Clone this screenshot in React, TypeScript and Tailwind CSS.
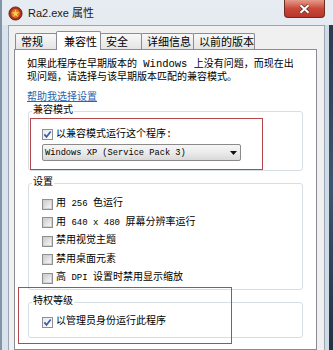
import React from "react";

// fonts: mono latin like SimSun's, CJK from Noto
const mono = "font-['Liberation_Mono','Noto_Sans_CJK_SC',monospace]";

function Box({ checked = false }: { checked?: boolean }) {
  return (
    <span className="relative flex h-[11px] w-[11px] shrink-0 items-center justify-center border border-[#8f8f8f] bg-[#f4f4f4]">
      {checked ? (
        <span className="h-[9px] w-[9px] bg-gradient-to-br from-[#e4e9f1] to-[#ffffff]" />
      ) : (
        <span className="h-[9px] w-[9px] border border-[#d2d2d2] bg-gradient-to-br from-[#cdcdcd] to-[#f7f7f7]" />
      )}
      {checked && (
        <svg className="absolute left-0 top-0" width="9" height="9" viewBox="0 0 9 9">
          <path d="M1.4 4.4 L3.5 6.9 L7.7 1.5" fill="none" stroke="#3b5c9e" strokeWidth="1.7" />
        </svg>
      )}
    </span>
  );
}

function Row({ checked, children }: { checked?: boolean; children: React.ReactNode }) {
  return (
    <div className="flex h-[18.5px] items-center gap-[3px]">
      <Box checked={checked} />
      <span className="leading-[12px]">{children}</span>
    </div>
  );
}

function Group({
  label,
  className = "",
  children,
}: {
  label: string;
  className?: string;
  children: React.ReactNode;
}) {
  return (
    <div className={"relative ml-[1px] w-[275px] rounded-[3px] border border-[#d5dfe5] " + className}>
      <span className="absolute left-[3px] top-[-7px] bg-white px-[1px] leading-[12px]">{label}</span>
      {children}
    </div>
  );
}

const L = ({ children }: { children: React.ReactNode }) => (
  <span className="text-[9px]">{children}</span>
);

const tabs = [
  { name: "常规", w: "w-[42px]" },
  { name: "兼容性", w: "w-[45px]", active: true },
  { name: "安全", w: "w-[42px]" },
  { name: "详细信息", w: "w-[53px]" },
  { name: "以前的版本", w: "w-[62px]" },
];

export default function App() {
  return (
    <div className="flex h-[350px] w-[333px] flex-col overflow-hidden border-l-2 border-[#8394a6] bg-gradient-to-b from-[#e6ecf2] to-[#d6e0ea] text-black">
      {/* title bar */}
      <div className="flex h-[25px] shrink-0 items-start">
        <svg className="ml-[6px] mt-[6px]" width="15" height="15" viewBox="0 0 15 15">
          <circle cx="7.5" cy="7.5" r="6.6" fill="#a9321c" stroke="#5a1a0e" strokeWidth="0.8" />
          <circle cx="7.5" cy="7.5" r="4.4" fill="#e0702a" />
          <path d="M7.5 3.4 L8.5 6.3 L11.4 6.3 L9 8.1 L9.9 11 L7.5 9.2 L5.1 11 L6 8.1 L3.6 6.3 L6.5 6.3 Z" fill="#f6d04a" />
        </svg>
        <span className="ml-[5px] mt-[6px] font-['Liberation_Sans','Noto_Sans_CJK_SC',sans-serif] text-[11px] leading-[14px] text-[#1a1a1a]">
          Ra2.exe 属性
        </span>
        <div className="ml-auto mr-[8px] flex h-[18px] w-[41px] items-center justify-center rounded-b-[4px] border border-t-0 border-[#6e2b22] bg-gradient-to-b from-[#e49a8a] via-[#c9493a] to-[#b8352a]">
          <svg width="11" height="10" viewBox="0 0 11 10">
            <path d="M1.5 1.2 L9.5 8.8 M9.5 1.2 L1.5 8.8" stroke="#5a1e18" strokeWidth="3.4" />
            <path d="M1.5 1.2 L9.5 8.8 M9.5 1.2 L1.5 8.8" stroke="#ffffff" strokeWidth="2.2" />
          </svg>
        </div>
      </div>

      {/* body */}
      <div className="flex min-h-0 flex-1">
        <div className="w-[6px] bg-[#d9e3ed]" />
        <div className="flex w-[317px] flex-col border-l border-r border-t border-[#9aa6b2] bg-[#f0f0f0] pl-[5px] pt-[5px]">
          {/* tabs */}
          <div className="flex h-[18px] items-end font-['Noto_Sans_CJK_SC',sans-serif] text-[11px]">
            {tabs.map((t, i) =>
              t.active ? (
                <div
                  key={t.name}
                  className={`relative z-10 -mb-px -ml-px flex h-[19px] items-center rounded-t-[2px] border border-b-0 border-[#898c95] bg-white pl-[7px] ${t.w}`}
                >
                  {t.name}
                </div>
              ) : (
                <div
                  key={t.name}
                  className={`flex h-[16px] items-center rounded-t-[2px] border border-b-0 border-[#898c95] bg-gradient-to-b from-[#f8f8f8] to-[#e4e4e4] pl-[5px] ${i === 0 ? "ml-[1px]" : "-ml-px"} ${t.w}`}
                >
                  {t.name}
                </div>
              )
            )}
          </div>

          {/* panel */}
          <div className={`relative w-[303px] flex-1 border border-[#898c95] bg-white pl-[12px] pt-[8px] text-[10px] ${mono}`}>
            <p className="leading-[13px]">
              如果此程序在早期版本的<span className="text-[10.5px]"> Windows </span>上没有问题，而现在出
              <br />
              现问题，请选择与该早期版本匹配的兼容模式。
            </p>
            <p className="mt-[8px] leading-[12px] text-[#2a64b0] underline">帮助我选择设置</p>

            <Group label="兼容模式" className="mt-[7px]">
              <div className="ml-[1px] mt-[6px] h-[52px] w-[233px] border border-[#b5484c] pl-[11px] pt-[10px]">
                <div className="flex h-[11px] items-center gap-[3px]">
                  <Box checked />
                  <span className="leading-[11px]">以兼容模式运行这个程序:</span>
                </div>
                <div className="mt-[4px] flex h-[17px] w-[199px] items-center justify-between rounded-[2px] border border-[#8a8a8a] bg-gradient-to-b from-[#f6f6f6] via-[#ebebeb] to-[#d9d9d9] pl-[2px] pr-[3px]">
                  <span className="text-[8.7px] leading-[12px]">Windows XP (Service Pack 3)</span>
                  <svg width="7" height="4" viewBox="0 0 7 4">
                    <path d="M0 0 L7 0 L3.5 4 Z" fill="#111" />
                  </svg>
                </div>
              </div>
            </Group>

            <Group label="设置" className="mt-[12px] pb-[1.5px] pl-[13px] pt-[11px]">
              <Row>
                用<L> 256 </L>色运行
              </Row>
              <Row>
                用<L> 640 x 480 </L>屏幕分辨率运行
              </Row>
              <Row>禁用视觉主题</Row>
              <Row>禁用桌面元素</Row>
              <Row>
                高<L> DPI </L>设置时禁用显示缩放
              </Row>
            </Group>

            <Group label="特权等级" className="mt-[12px] pb-[5.5px] pl-[13px] pt-[10px]">
              <Row checked>以管理员身份运行此程序</Row>
            </Group>

            {/* annotation frame drawn over the page */}
            <div className="pointer-events-none absolute left-[3px] top-[237px] h-[57px] w-[214px] border border-[#b5484c]" />
          </div>
        </div>
        <div className="flex w-[8px]">
          <div className="w-[4px] bg-[#cfdbe7]" />
          <div className="w-[4px] bg-gradient-to-b from-[#2c3b4c] via-[#3d556e] to-[#24313f]" />
        </div>
      </div>
    </div>
  );
}
